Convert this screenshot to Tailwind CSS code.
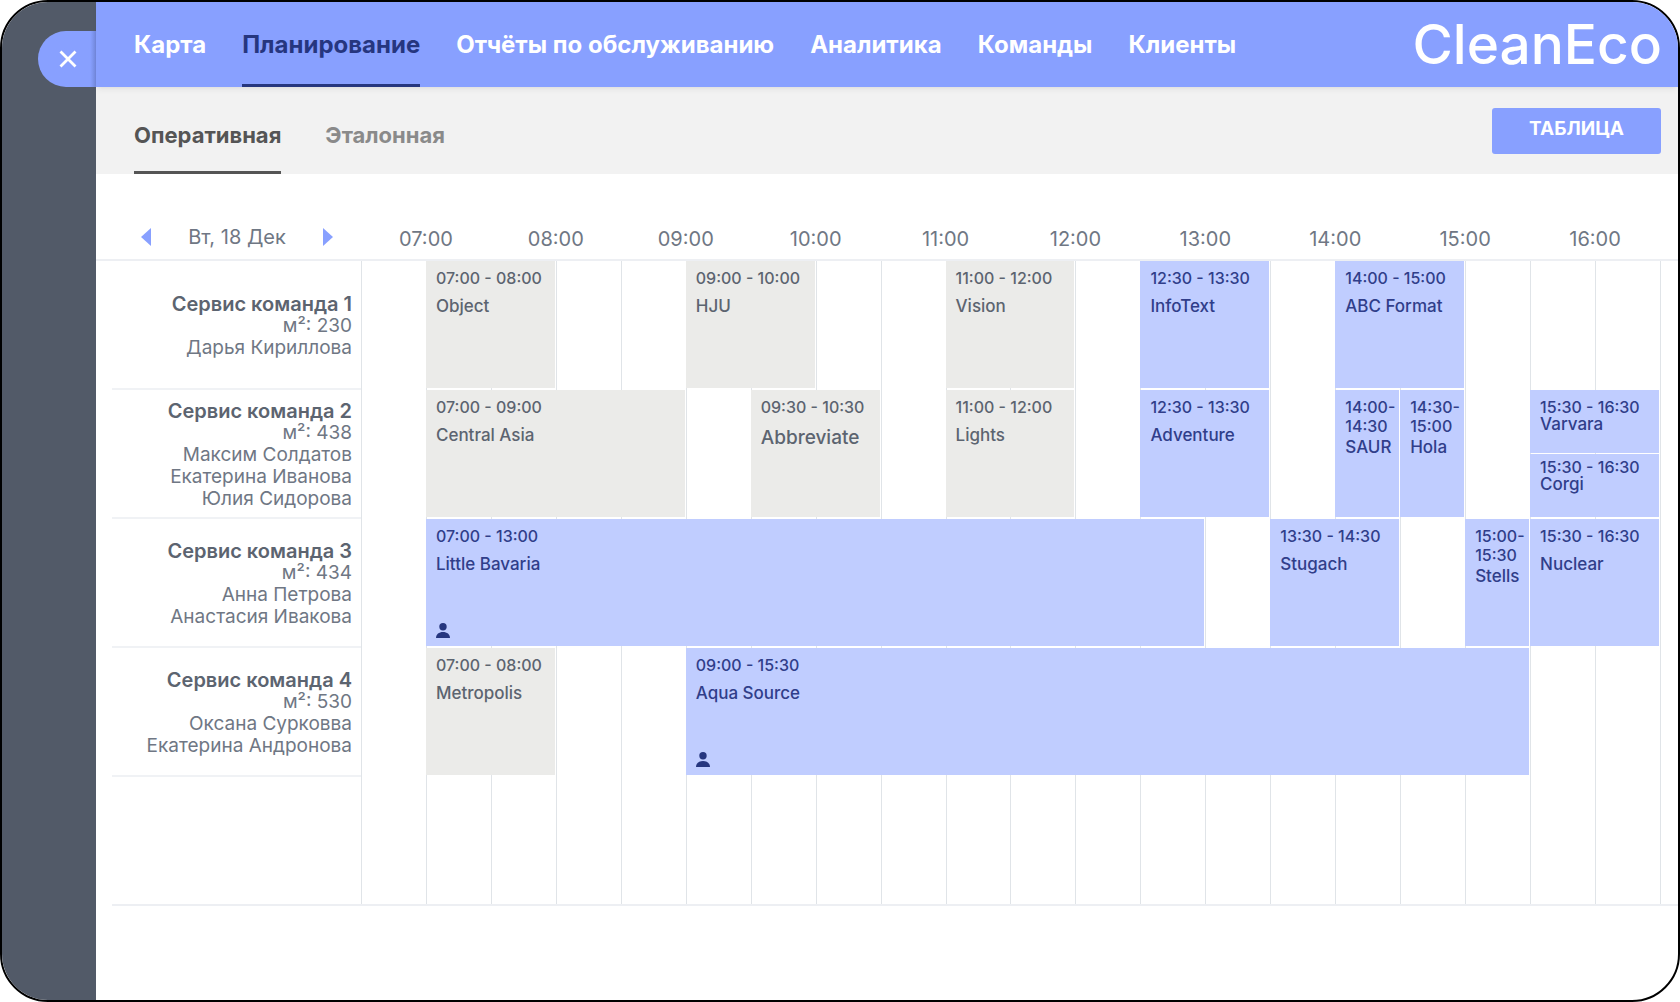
<!DOCTYPE html>
<html lang="ru">
<head>
  <meta charset="UTF-8" />
  <meta name="viewport" content="width=device-width, initial-scale=1.0" />
  <title>CleanEco</title>
  <script src="https://cdn.jsdelivr.net/npm/@tailwindcss/browser@4"></script>
</head>
<body class="bg-white font-['Inter',sans-serif] text-[#5c6470]">
  <div class="flex min-h-screen overflow-hidden rounded-[48px] border-2 border-black bg-white">
    <aside class="flex w-[94px] shrink-0 justify-end bg-[#525a68] pt-[29px]">
      <button type="button" aria-label="Закрыть" class="flex h-14 w-[58px] items-center rounded-l-full bg-linear-to-l from-[#7288db] to-[#88a0ff] to-10% pl-[21px] text-white">
        <svg class="size-[18px]" viewBox="0 0 18 18" fill="none" stroke="currentColor" stroke-width="2.8"><path d="M1.5 1.5l15 15M16.5 1.5l-15 15" /></svg>
      </button>
    </aside>

    <div class="min-w-0 flex-1">
      <header class="relative flex h-[85px] justify-between bg-[#88a0ff] pr-4 pl-[38px] text-white shadow-md shadow-black/5">
        <nav class="flex gap-9 text-[24px] leading-[34px] font-bold whitespace-nowrap">
          <a href="#" class="pt-[26px]">Карта</a>
          <a href="#" class="border-b-3 border-[#26367f] pt-[26px] text-[#26367f]">Планирование</a>
          <a href="#" class="pt-[26px]">Отчёты по обслуживанию</a>
          <a href="#" class="pt-[26px]">Аналитика</a>
          <a href="#" class="pt-[26px]">Команды</a>
          <a href="#" class="pt-[26px]">Клиенты</a>
        </nav>
        <a href="#" class="pt-[10px] text-[55px] leading-[64px] font-medium">CleanEco</a>
      </header>

      <div class="flex h-[87px] justify-between bg-[#f2f2f2] pr-[17px] pl-[38px]">
        <div class="flex gap-11 text-[22px] leading-[30px] font-bold">
          <a href="#" class="border-b-3 border-[#555] pt-[33px] text-[#555]">Оперативная</a>
          <a href="#" class="pt-[33px] text-[#8a8a8a]">Эталонная</a>
        </div>
        <button type="button" class="mt-[21px] h-[46px] w-[169px] rounded-[3px] bg-[#88a0ff] pb-[3px] text-[19px] font-bold text-white">ТАБЛИЦА</button>
      </div>

      <div class="flex h-[87px] items-end border-b-2 border-[#edeff3] text-[20px] text-[#6f7784]">
        <div class="mb-[7px] flex w-[265px] items-center justify-between pr-[28px] pl-[45px]">
          <button type="button" aria-label="Предыдущий день" class="text-[#88a0ff]">
            <svg class="h-[18px] w-[10px]" viewBox="0 0 10 18" fill="currentColor"><path d="M10 0v18L0 9z" /></svg>
          </button>
          <span>Вт, 18 Дек</span>
          <button type="button" aria-label="Следующий день" class="text-[#88a0ff]">
            <svg class="h-[18px] w-[10px]" viewBox="0 0 10 18" fill="currentColor"><path d="M0 0v18l10-9z" /></svg>
          </button>
        </div>
        <div id="hours" class="mr-[18px] mb-[5px] grid flex-1 grid-cols-10 text-center"></div>
      </div>

      <main class="flex">
        <div id="teams" class="ml-4 w-[249px] shrink-0 text-right text-[19px] leading-[22px]"></div>
        <div id="board" class="grid flex-1 grid-cols-[repeat(20,minmax(0,1fr))_18px] grid-rows-[repeat(4,129px)_127px] border-b-2 border-[#edeff3] text-[17px] leading-[19px] font-medium"></div>
      </main>
    </div>
  </div>

  <script>
    const teams = [
      { name: "Сервис команда 1", area: 230, people: ["Дарья Кириллова"] },
      { name: "Сервис команда 2", area: 438, people: ["Максим Солдатов", "Екатерина Иванова", "Юлия Сидорова"] },
      { name: "Сервис команда 3", area: 434, people: ["Анна Петрова", "Анастасия Ивакова"] },
      { name: "Сервис команда 4", area: 530, people: ["Оксана Сурковва", "Екатерина Андронова"] },
    ];

    // half: two jobs share one slot, person: job has someone assigned
    const jobs = [
      { row: 1, from: "07:00", to: "08:00", title: "Object", done: true },
      { row: 1, from: "09:00", to: "10:00", title: "HJU", done: true },
      { row: 1, from: "11:00", to: "12:00", title: "Vision", done: true },
      { row: 1, from: "12:30", to: "13:30", title: "InfoText" },
      { row: 1, from: "14:00", to: "15:00", title: "ABC Format" },
      { row: 2, from: "07:00", to: "09:00", title: "Central Asia", done: true },
      { row: 2, from: "09:30", to: "10:30", title: "Abbreviate", done: true, large: true },
      { row: 2, from: "11:00", to: "12:00", title: "Lights", done: true },
      { row: 2, from: "12:30", to: "13:30", title: "Adventure" },
      { row: 2, from: "14:00", to: "14:30", title: "SAUR" },
      { row: 2, from: "14:30", to: "15:00", title: "Hola" },
      { row: 2, from: "15:30", to: "16:30", title: "Varvara", half: "top" },
      { row: 2, from: "15:30", to: "16:30", title: "Corgi", half: "bottom" },
      { row: 3, from: "07:00", to: "13:00", title: "Little Bavaria", person: true },
      { row: 3, from: "13:30", to: "14:30", title: "Stugach" },
      { row: 3, from: "15:00", to: "15:30", title: "Stells" },
      { row: 3, from: "15:30", to: "16:30", title: "Nuclear" },
      { row: 4, from: "07:00", to: "08:00", title: "Metropolis", done: true },
      { row: 4, from: "09:00", to: "15:30", title: "Aqua Source", person: true },
    ];

    const personIcon = `<svg class="mt-auto mb-2 h-[15px] w-[14px] text-[#26367f]" viewBox="0 0 14 15" fill="currentColor"><circle cx="7" cy="3.7" r="3.7" /><path d="M0 15c0-3.8 3-6 7-6s7 2.2 7 6z" /></svg>`;

    // column 1 starts at 06:30, every column is half an hour
    function column(time) {
      const [h, m] = time.split(":").map(Number);
      return (h * 60 + m - 390) / 30 + 1;
    }

    document.getElementById("hours").innerHTML = Array.from({ length: 10 }, (_, i) =>
      `<span>${String(i + 7).padStart(2, "0")}:00</span>`).join("");

    document.getElementById("teams").innerHTML = teams.map(t => `
      <section class="flex h-[129px] flex-col justify-center border-b-2 border-[#f0f2f5] pt-0.5 pr-[9px] text-[#6f7784]">
        <h2 class="text-[20px] leading-[22px] font-semibold text-[#5c6470]">${t.name}</h2>
        <p>м²: ${t.area}</p>
        ${t.people.map(p => `<p>${p}</p>`).join("")}
      </section>`).join("") + `<div class="h-[129px] border-b-2 border-[#edeff3]"></div>`;

    const lines = Array.from({ length: 21 }, (_, i) =>
      `<div class="row-span-full border-l border-[#e0e4e8]" style="grid-column:${i + 1}"></div>`).join("");

    document.getElementById("board").innerHTML = lines + jobs.map(j => {
      const start = column(j.from), end = column(j.to);
      const narrow = end - start === 1;
      const color = j.done ? "bg-[#ebebe9] text-[#5c6470]" : "bg-[#c0cdff] text-[#303e8a]";
      const place = j.half === "top" ? "mb-[66px] pt-2" : j.half === "bottom" ? "mt-[64px] mb-0.5 pt-1" : "mb-0.5 pt-2";
      const gap = j.half ? "-mt-0.5" : narrow ? "mt-0.5" : "mt-[9px]";
      const size = j.large ? "text-[19px] leading-6" : "";
      return `
        <article class="z-10 mr-px flex flex-col overflow-hidden pl-[10px] ${place} ${color}" style="grid-area:${j.row} / ${start} / auto / ${end}">
          <p class="text-[16px]">${narrow ? j.from + "-<br>" + j.to : j.from + " - " + j.to}</p>
          <h3 class="${gap} ${size}">${j.title}</h3>
          ${j.person ? personIcon : ""}
        </article>`;
    }).join("");
  </script>
</body>
</html>
